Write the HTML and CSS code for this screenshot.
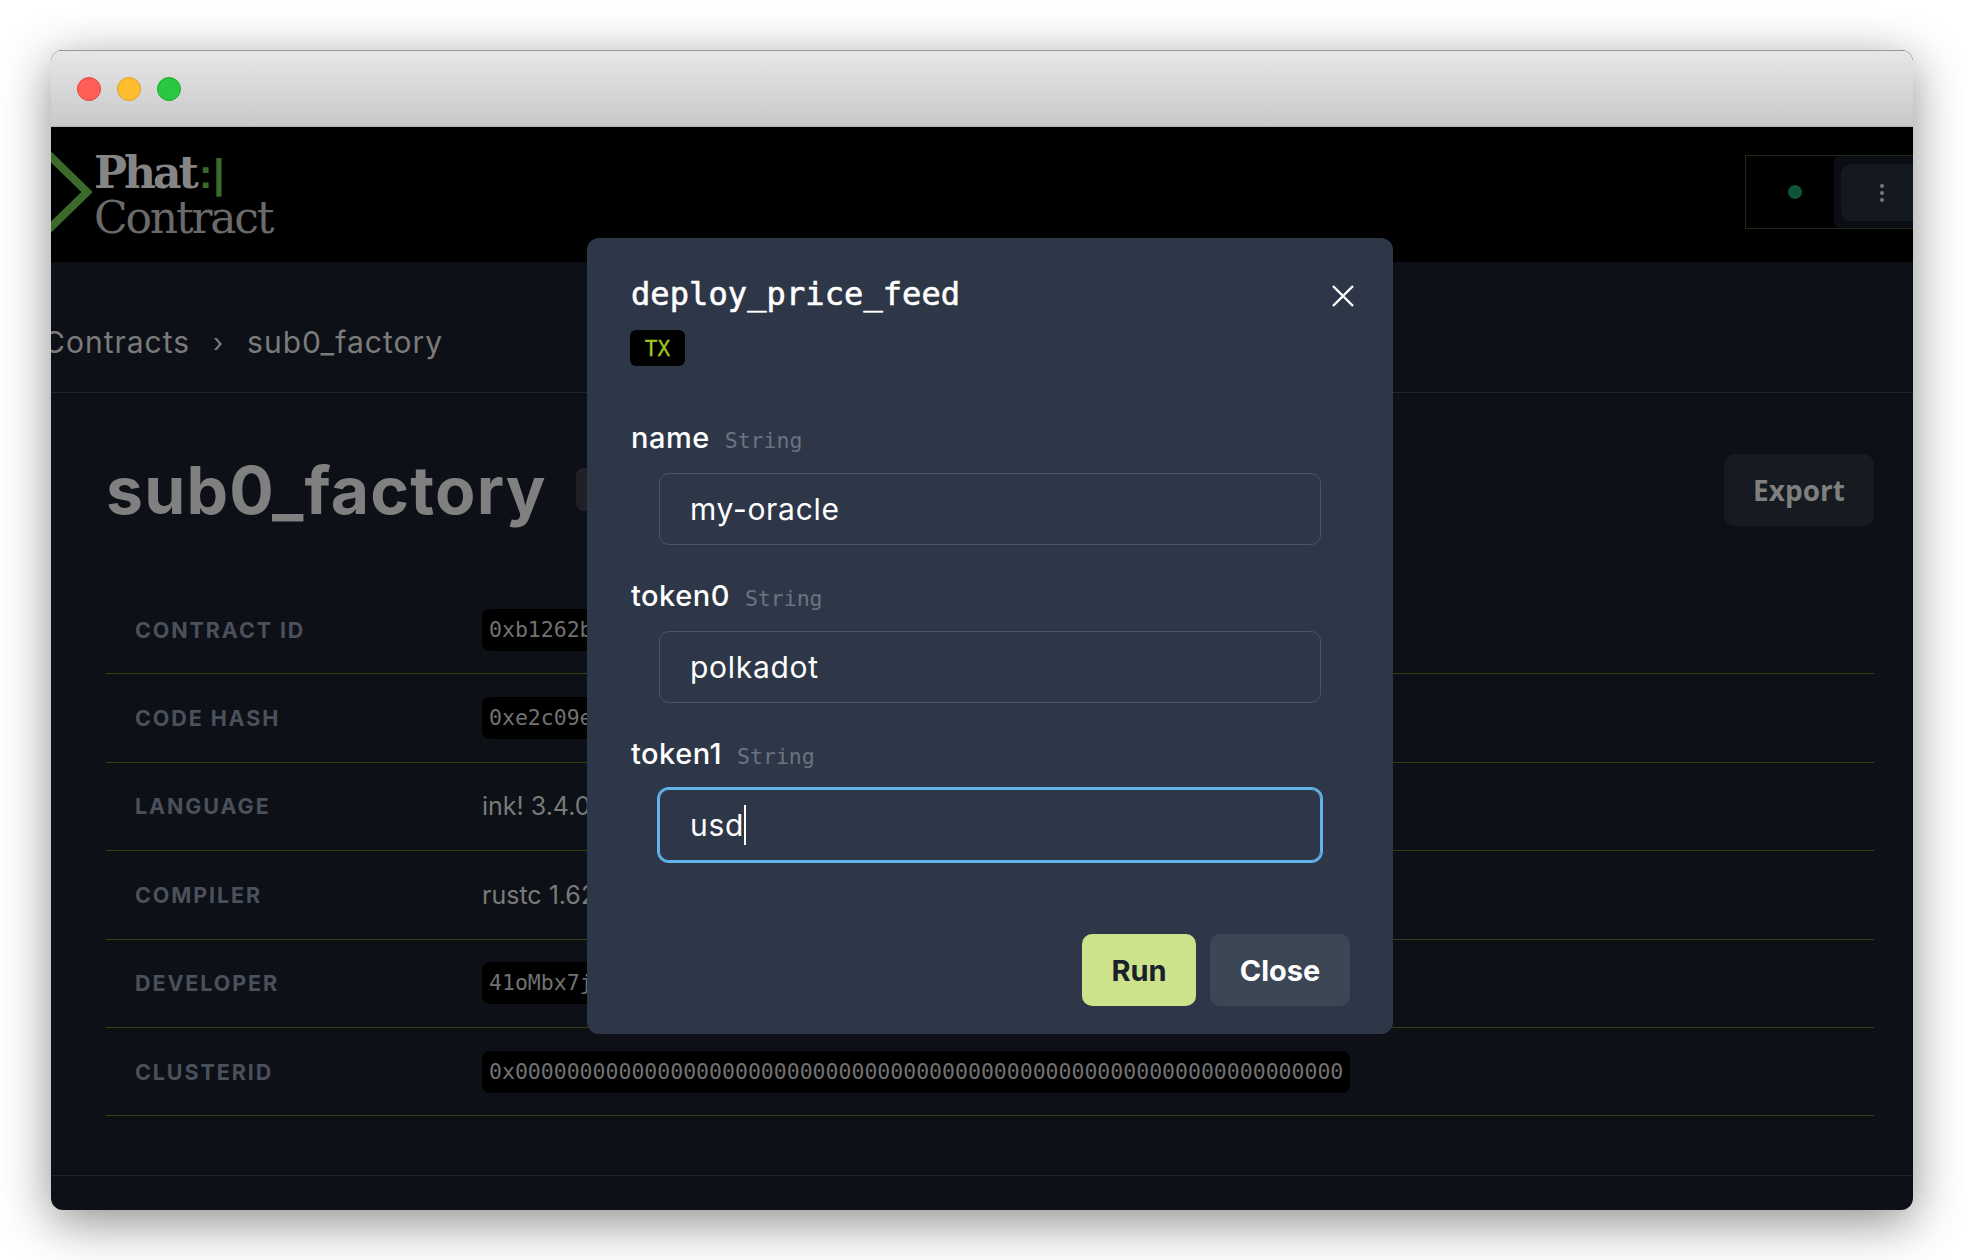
FILE: index.html
```html
<!DOCTYPE html>
<html lang="en">
<head>
  <meta charset="UTF-8">
  <title>sub0_factory</title>
  <meta name="viewport" content="width=device-width, initial-scale=1.0">
  <link rel="stylesheet" href="styles.css">
</head>
<body>
  <div class="window">
    <div class="titlebar">
      <span class="light red"></span>
      <span class="light yellow"></span>
      <span class="light green"></span>
    </div>

    <header class="topbar">
      <div class="logo">
        <svg class="logo-mark" width="41" height="80" viewBox="0 0 41 80">
          <polyline points="-4,1 36,40 -4,79" fill="none" stroke="#3c6a2b" stroke-width="8"/>
        </svg>
        <div class="logo-text">
          <div class="logo-phat">Phat<span class="logo-colon">:|</span></div>
          <div class="logo-contract">Contract</div>
        </div>
      </div>
      <div class="status">
        <div class="status-dot-wrap"><span class="status-dot"></span></div>
        <div class="status-menu">
          <div class="kebab"><i></i><i></i><i></i></div>
        </div>
      </div>
    </header>

    <nav class="crumbs">
      <span>Contracts</span>
      <span class="crumb-sep">›</span>
      <span>sub0_factory</span>
    </nav>

    <section class="heading">
      <h1>sub0_factory</h1>
      <span class="tag"></span>
      <button class="export">Export</button>
    </section>

    <div class="rows">
      <div class="row">
        <div class="row-label">Contract ID</div>
        <div><code class="chip">0xb1262b5f3c0a9e7d4186f2ac39d05be71c84a6f0d92e3b5716c8a04fe97d21b3</code></div>
      </div>
      <div class="row">
        <div class="row-label">Code Hash</div>
        <div><code class="chip">0xe2c09e4a71d3f85b06c2ea94178db3f0a65c29e1d7408fb36a1e95c07d42b8f6</code></div>
      </div>
      <div class="row">
        <div class="row-label">Language</div>
        <div class="row-value">ink! 3.4.0</div>
      </div>
      <div class="row">
        <div class="row-label">Compiler</div>
        <div class="row-value">rustc 1.62.0</div>
      </div>
      <div class="row">
        <div class="row-label">Developer</div>
        <div><code class="chip">41oMbx7jK2pQvXn8sRtY5wZc3HdLfG9uEaB6mNqTs4VhPy</code></div>
      </div>
      <div class="row">
        <div class="row-label">ClusterId</div>
        <div><code class="chip">0x0000000000000000000000000000000000000000000000000000000000000000</code></div>
      </div>
    </div>

    <footer class="foot"></footer>

    <div class="modal">
      <div class="modal-title">deploy_price_feed</div>
      <svg class="modal-close" width="22" height="22" viewBox="0 0 22 22">
        <path d="M1 1L21 21M21 1L1 21" stroke="#fff" stroke-width="2.4" fill="none"/>
      </svg>
      <div><span class="tx">TX</span></div>

      <div class="field first">
        <div class="field-label">name <span class="field-type">String</span></div>
        <div class="field-input">my-oracle</div>
      </div>
      <div class="field">
        <div class="field-label">token0 <span class="field-type">String</span></div>
        <div class="field-input">polkadot</div>
      </div>
      <div class="field">
        <div class="field-label">token1 <span class="field-type">String</span></div>
        <div class="field-input focused">usd<span class="caret"></span></div>
      </div>

      <div class="modal-actions">
        <button class="btn run">Run</button>
        <button class="btn close">Close</button>
      </div>
    </div>
  </div>
</body>
</html>
```

FILE: styles.css
```css
* { box-sizing: border-box; }
body { margin: 0; height: 1260px; padding: 50px 51px; background: #fff; font-family: Inter, sans-serif; overflow: hidden; }

.window { position: relative; height: 1160px; background: #0d1117; border-radius: 12px; overflow: hidden; box-shadow: 0 12px 50px rgba(0,0,0,.45); }

.titlebar { display: flex; align-items: center; gap: 16px; height: 77px; padding-left: 26px; background: linear-gradient(#e7e7e7, #c9c9c9); border-top: 1px solid #999; border-bottom: 1px solid #b4b4b4; }
.light { width: 24px; height: 24px; border-radius: 50%; }
.red { background: #ff5f57; border: 1px solid #e0443e; }
.yellow { background: #febc2e; border: 1px solid #dea123; }
.green { background: #28c840; border: 1px solid #1aab29; }

.topbar { display: flex; justify-content: space-between; align-items: center; height: 135px; background: #000; }
.logo { display: flex; align-items: center; gap: 2px; }
.logo-mark { display: block; margin-top: -5px; }
.logo-text { font-family: "DejaVu Serif", serif; font-size: 44px; line-height: 43px; }
.logo-phat { color: #858585; font-weight: 700; letter-spacing: -3px; }
.logo-colon { margin-left: 3px; color: #3c6a2b; font-family: "Liberation Sans", sans-serif; font-size: 40px; font-weight: 700; letter-spacing: 1px; }
.logo-contract { color: #6a6a6a; letter-spacing: -2.2px; }

.status { display: flex; flex: none; width: 176px; height: 74px; margin: -5px -8px 0 0; border: 1px solid #1f2b17; border-right: none; }
.status-dot-wrap { display: flex; flex: none; width: 88px; padding-left: 10px; align-items: center; justify-content: center; }
.status-dot { width: 14px; height: 14px; border-radius: 50%; background: #0f5537; }
.status-menu { flex: 1; padding: 8px 0 7px 7px; background: #0a0e14; border-radius: 5px 0 0 5px; }
.kebab { display: flex; flex-direction: column; align-items: center; justify-content: center; gap: 3px; height: 100%; padding-left: 2px; background: #14181f; border-radius: 10px; }
.kebab i { width: 4px; height: 4px; border-radius: 50%; background: #777; }

.crumbs { display: flex; align-items: center; gap: 23px; height: 131px; margin-left: -8px; padding-top: 30px; border-bottom: 1px solid #22252b; color: #7b7b7b; font-size: 30px; letter-spacing: 1px; }
.crumb-sep { font-size: 26px; }

.heading { display: flex; align-items: center; height: 193px; padding: 0 39px 0 55px; }
h1 { margin: 0; color: #808080; font-family: Inter, sans-serif; font-size: 66px; font-weight: 700; letter-spacing: 1.2px; }
.tag { width: 60px; height: 43px; margin-left: 29px; background: #1f2126; border-radius: 8px; }
.export { margin-left: auto; width: 150px; height: 72px; border: none; border-radius: 11px; background: #161a21; color: #7f7f7f; font-family: "Open Sans", sans-serif; font-size: 28px; font-weight: 700; }

.rows { margin: 0 39px 0 55px; }
.row { display: grid; grid-template-columns: 376px 1fr; align-items: center; height: 88.4px; border-bottom: 1px solid #343f10; }
.row-label { padding-left: 29px; color: #4a505c; font-size: 21.5px; font-weight: 700; letter-spacing: 1.9px; text-transform: uppercase; }
.row-value { color: #7a7a7a; font-size: 25px; }
.chip { display: inline-block; height: 42px; padding: 0 7px; background: #000; border-radius: 8px; color: #727272; font-family: "DejaVu Sans Mono", monospace; font-size: 21.5px; line-height: 42px; white-space: nowrap; }

.foot { height: 35px; margin-top: 59px; border-top: 1px solid #1f2228; }

.modal { position: absolute; left: 536px; top: 188px; width: 806px; height: 796px; padding: 36px 43px 0 44px; background: #2d3748; border-radius: 12px; color: #fff; }
.modal-title { font-family: "DejaVu Sans Mono", monospace; font-size: 32px; line-height: 40px; letter-spacing: .1px; -webkit-text-stroke: .6px #fff; }
.modal-close { position: absolute; right: 39px; top: 47px; }
.tx { display: inline-block; width: 55px; height: 36px; margin-top: 16px; margin-left: -1px; background: #000; border-radius: 6px; color: #a3c428; font-family: "DejaVu Sans Mono", monospace; font-size: 21px; line-height: 38px; text-align: center; -webkit-text-stroke: .3px #a3c428; }

.field { margin-top: 30px; }
.field.first { margin-top: 51px; }
.field-label { display: flex; align-items: baseline; gap: 15px; height: 42px; font-size: 29px; font-weight: 500; letter-spacing: .5px; line-height: 42px; }
.field-type { color: #6b7380; font-family: "DejaVu Sans Mono", monospace; font-size: 21.5px; font-weight: 400; letter-spacing: 0; }
.field-input { display: flex; align-items: center; width: 662px; height: 72px; margin: 14px 0 0 28px; padding-left: 30px; border: 1px solid #4a5568; border-radius: 10px; font-size: 30px; letter-spacing: .7px; }
.field-input.focused { border-color: #63b3ed; box-shadow: 0 0 0 2px #63b3ed; }
.caret { width: 2px; height: 40px; margin-left: 0; background: #fff; }

.modal-actions { display: flex; justify-content: flex-end; gap: 14px; margin-top: 73px; }
.btn { height: 72px; border: none; border-radius: 10px; font-family: Inter, sans-serif; font-size: 29px; font-weight: 700; }
.run { width: 114px; background: #cce28b; color: #1a202c; }
.close { width: 140px; background: #3d4655; color: #fff; }
```
